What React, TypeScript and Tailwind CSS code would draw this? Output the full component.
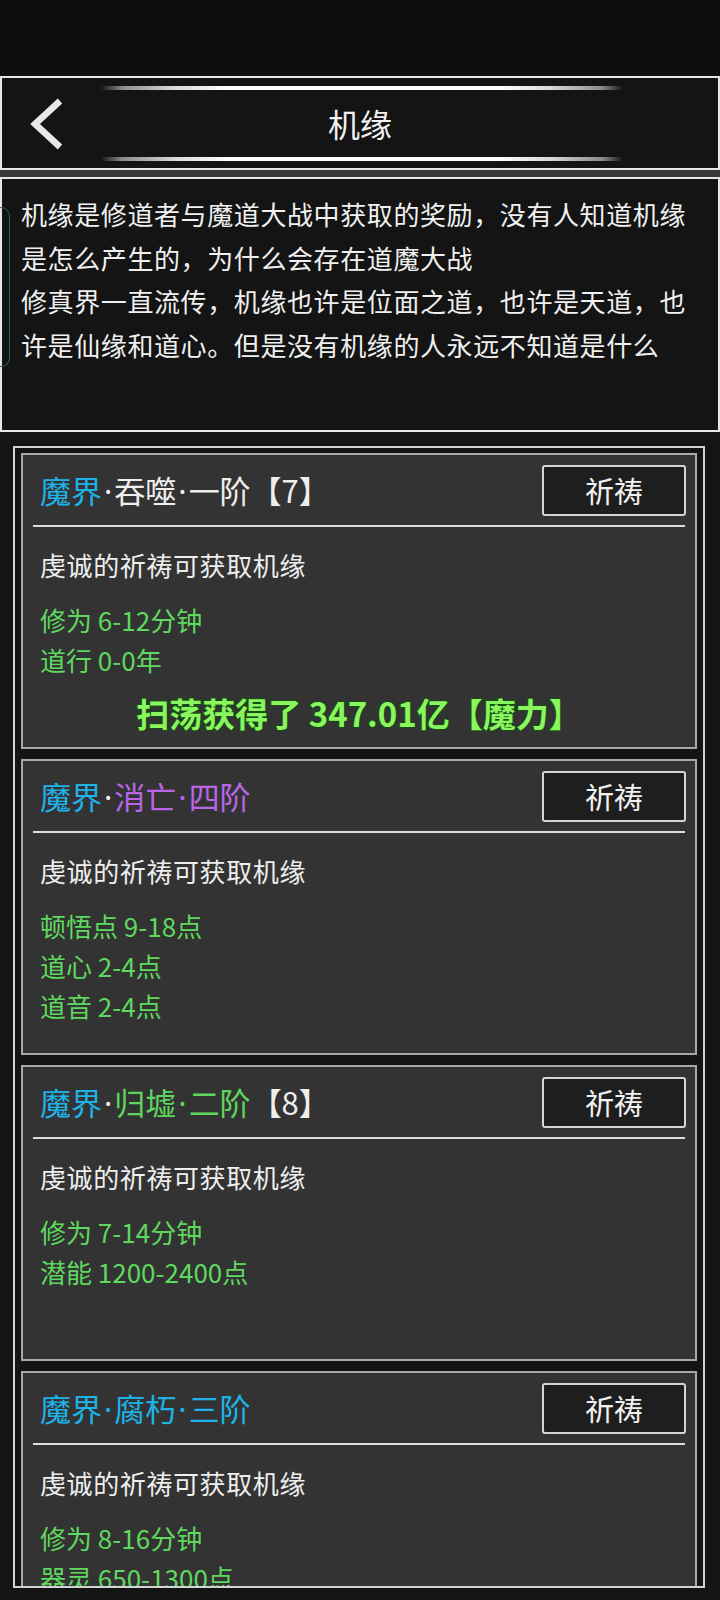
import React from "react";

type Seg = { t: string; c: string };

interface Blessing {
  title: Seg[];
  lines: string[];
  reward?: string;
}

const CYAN = "text-[#1fb2e6]";
const WHITE = "text-[#eeeeee]";
const PURPLE = "text-[#b866e4]";
const GREEN = "text-[#5cd65c]";

const BLESSINGS: Blessing[] = [
  {
    title: [
      { t: "魔界", c: CYAN },
      { t: "·吞噬·一阶【7】", c: WHITE },
    ],
    lines: ["修为 6-12分钟", "道行 0-0年"],
    reward: "扫荡获得了 347.01亿【魔力】",
  },
  {
    title: [
      { t: "魔界", c: CYAN },
      { t: "·", c: WHITE },
      { t: "消亡·四阶", c: PURPLE },
    ],
    lines: ["顿悟点 9-18点", "道心 2-4点", "道音 2-4点"],
  },
  {
    title: [
      { t: "魔界", c: CYAN },
      { t: "·", c: WHITE },
      { t: "归墟·二阶", c: GREEN },
      { t: "【8】", c: WHITE },
    ],
    lines: ["修为 7-14分钟", "潜能 1200-2400点"],
  },
  {
    title: [
      { t: "魔界", c: CYAN },
      { t: "·腐朽·三阶", c: CYAN },
    ],
    lines: ["修为 8-16分钟", "器灵 650-1300点"],
  },
];

const DESC = [
  "机缘是修道者与魔道大战中获取的奖励，没有人知道机缘",
  "是怎么产生的，为什么会存在道魔大战",
  "修真界一直流传，机缘也许是位面之道，也许是天道，也",
  "许是仙缘和道心。但是没有机缘的人永远不知道是什么",
];

// the CJK font draws "·" full width; the game uses a narrow dot
function withNarrowDots(text: string) {
  return text.split(/(·)/).map((part, i) =>
    part === "·" ? (
      <span key={i} className="font-['Noto_Sans',sans-serif] px-[2px]">
        ·
      </span>
    ) : (
      part
    )
  );
}

function GlowLine({ className }: { className: string }) {
  return (
    <div
      className={`absolute left-[99px] w-[522px] h-[4px] rounded-full bg-[linear-gradient(90deg,transparent,#8a8a8a_4%,#d8d8d8_14%,#ffffff_24%,#ffffff_76%,#d8d8d8_86%,#8a8a8a_96%,transparent)] ${className}`}
    />
  );
}

function BlessingCard({ item }: { item: Blessing }) {
  return (
    <div className="h-[296px] shrink-0 bg-[#333333] border-2 border-[#a8a8a8]">
      <div className="h-[70px] flex items-center justify-between pl-[17px] pr-[9px]">
        <div className="text-[31px] leading-none">
          {item.title.map((s, i) => (
            <span key={i} className={s.c}>
              {withNarrowDots(s.t)}
            </span>
          ))}
        </div>
        <button className="w-[144px] h-[51px] bg-[#1e1e1e] border-2 border-[#d4d4d4] rounded-[3px] text-[29px] text-[#f2f2f2] leading-none">
          祈祷
        </button>
      </div>
      <div className="mx-[10px] h-[2px] bg-[#dcdcdc]" />
      <div className="pl-[17px] pt-[18px]">
        <div className="text-[26px] leading-[40px] tracking-[0.6px] text-[#eeeeee]">
          虔诚的祈祷可获取机缘
        </div>
        <div className="mt-[15px]">
          {item.lines.map((l) => (
            <div key={l} className="text-[26px] leading-[40px] text-[#5fd85f]">
              {l}
            </div>
          ))}
        </div>
      </div>
      {item.reward && (
        <div className="mt-[13px] text-center text-[33px] leading-[40px] font-bold text-[#8af55e] [-webkit-text-stroke:2px_#154d15] [paint-order:stroke_fill]">
          {item.reward}
        </div>
      )}
    </div>
  );
}

export default function App() {
  return (
    <div className="w-[720px] h-[1600px] overflow-hidden bg-[#0e0e0e] font-['Noto_Sans_CJK_SC','Noto_Sans',sans-serif]">
      <div className="h-[76px]" />

      <header className="relative h-[94px] bg-[#141414] border-2 border-[#e6e6e6] flex items-center justify-center">
        <GlowLine className="top-[8px]" />
        <GlowLine className="bottom-[7px]" />
        <svg
          className="absolute left-[24px] top-[19px]"
          width="40"
          height="54"
          viewBox="0 0 40 54"
        >
          <polyline
            points="34,4 9,27 34,50"
            fill="none"
            stroke="#e8e8e8"
            strokeWidth="6.5"
            strokeLinecap="butt"
            strokeLinejoin="miter"
          />
        </svg>
        <h1 className="text-[32px] font-normal text-[#f2f2f2] leading-none">
          机缘
        </h1>
      </header>

      <div className="h-[7px] bg-[#393939]" />

      <section className="relative h-[255px] bg-[#141414] border-2 border-[#e6e6e6] pl-[19px] pt-[13px]">
        <div className="absolute -left-[10px] top-[28px] w-[18px] h-[160px] rounded-[12px] border-[1.5px] border-[#2e6a3e]" />
        {DESC.map((line) => (
          <div
            key={line}
            className="text-[26px] leading-[43.5px] tracking-[0.6px] text-[#f0f0f0] whitespace-nowrap"
          >
            {line}
          </div>
        ))}
      </section>

      <section className="bg-[#141414] h-[1168px] pt-[14px] pl-[13px] pr-[15px]">
        <div className="h-[1142px] overflow-hidden border-2 border-[#d2d2d2] px-[6px] pt-[5px] flex flex-col gap-[10px]">
          {BLESSINGS.map((b, i) => (
            <BlessingCard key={i} item={b} />
          ))}
        </div>
      </section>
    </div>
  );
}
